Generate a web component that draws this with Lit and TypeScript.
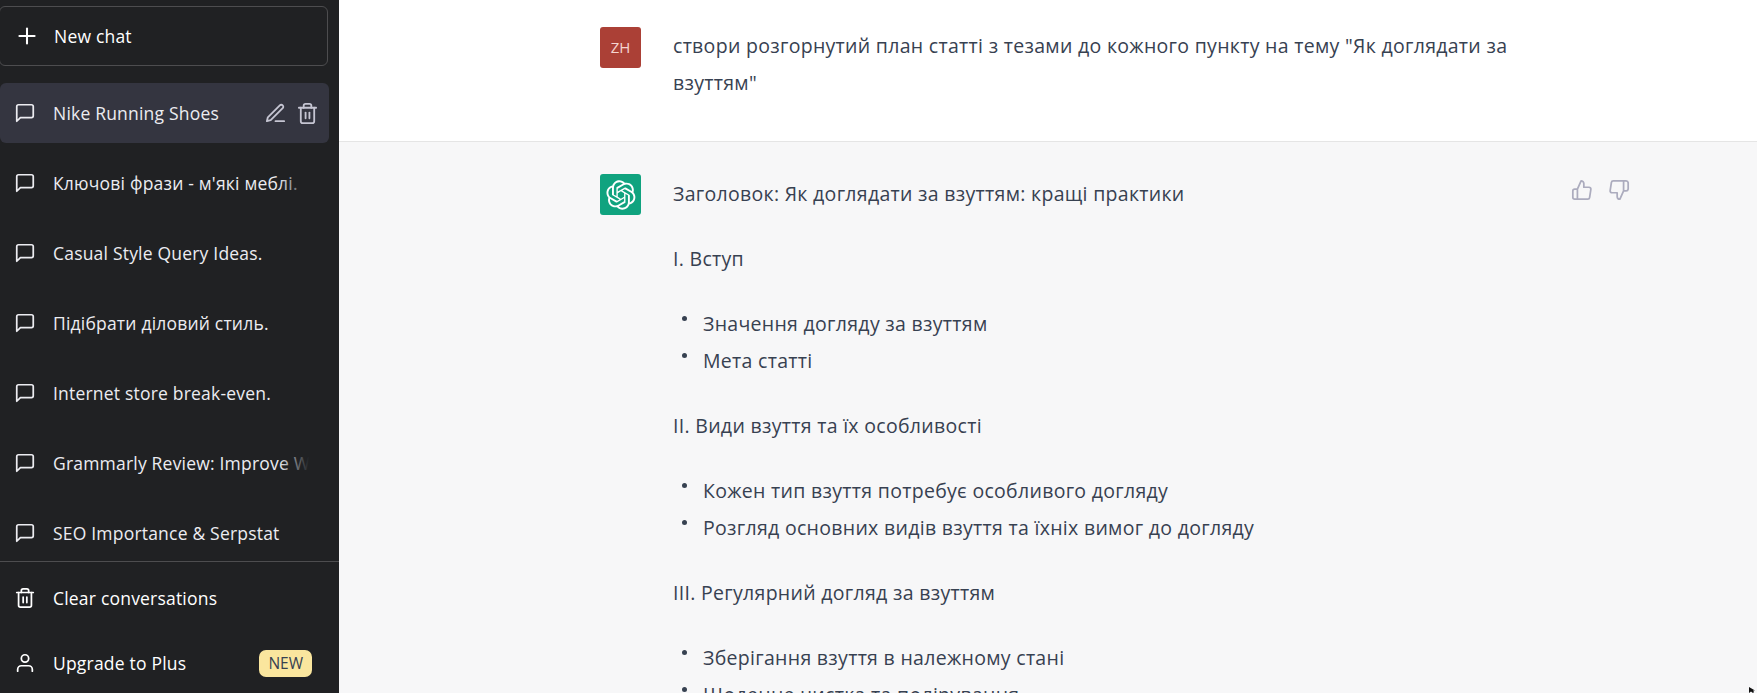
import { LitElement, html, css, svg } from "lit";
import { customElement } from "lit/decorators.js";

const ic = (inner: unknown, cls = "ic") =>
  html`<svg class=${cls} viewBox="0 0 24 24" fill="none" stroke="currentColor" stroke-width="1.9" stroke-linecap="round" stroke-linejoin="round">${inner}</svg>`;
const msg = () => ic(svg`<path d="M21 15a2 2 0 0 1-2 2H7l-4 4V5a2 2 0 0 1 2-2h14a2 2 0 0 1 2 2z"/>`);
const trash = (cls = "ic") => ic(svg`<polyline points="3 6 5 6 21 6"/><path d="M19 6v14a2 2 0 0 1-2 2H7a2 2 0 0 1-2-2V6m3 0V4a2 2 0 0 1 2-2h4a2 2 0 0 1 2 2v2"/><line x1="10" y1="11" x2="10" y2="17"/><line x1="14" y1="11" x2="14" y2="17"/>`, cls);
const pen = () => ic(svg`<path d="M12 20h9"/><path d="M16.5 3.5a2.121 2.121 0 0 1 3 3L7 19l-4 1 1-4L16.5 3.5z"/>`, "tool");
const plus = () => ic(svg`<line x1="12" y1="5" x2="12" y2="19"/><line x1="5" y1="12" x2="19" y2="12"/>`, "plus");
const user = () => ic(svg`<path d="M20 21v-2a4 4 0 0 0-4-4H8a4 4 0 0 0-4 4v2"/><circle cx="12" cy="7" r="4"/>`);
const up = () => ic(svg`<path d="M14 9V5a3 3 0 0 0-3-3l-4 9v11h11.28a2 2 0 0 0 2-1.7l1.38-9a2 2 0 0 0-2-2.3zM7 22H4a2 2 0 0 1-2-2v-7a2 2 0 0 1 2-2h3"/>`, "thumb");
const down = () => ic(svg`<path d="M10 15v4a3 3 0 0 0 3 3l4-9V2H5.72a2 2 0 0 0-2 1.7l-1.38 9a2 2 0 0 0 2 2.3zm7-13h2.67A2.31 2.31 0 0 1 22 4v7a2.31 2.31 0 0 1-2.33 2H17"/>`, "thumb");
const LOGO = "M37.5324 16.8707C37.9808 15.5241 38.1363 14.0974 37.9886 12.6859C37.8409 11.2744 37.3934 9.91076 36.676 8.68622C35.6126 6.83404 33.9882 5.3676 32.0373 4.4985C30.0864 3.62941 27.9098 3.40259 25.8215 3.85078C24.8796 2.7893 23.7219 1.94125 22.4257 1.36341C21.1295 0.785575 19.7249 0.491269 18.3058 0.500197C16.1708 0.495044 14.0893 1.16803 12.3614 2.42214C10.6335 3.67624 9.34853 5.44666 8.6917 7.47815C7.30085 7.76286 5.98686 8.3414 4.8377 9.17505C3.68854 10.0087 2.73073 11.0782 2.02839 12.312C0.956464 14.1591 0.498905 16.2988 0.721698 18.4228C0.944492 20.5467 1.83612 22.5449 3.268 24.1293C2.81966 25.4759 2.66413 26.9026 2.81182 28.3141C2.95951 29.7256 3.40701 31.0892 4.12437 32.3138C5.18791 34.1659 6.8123 35.6322 8.76321 36.5013C10.7141 37.3704 12.8907 37.5973 14.9789 37.1492C15.9208 38.2107 17.0786 39.0587 18.3747 39.6366C19.6709 40.2144 21.0755 40.5087 22.4946 40.4998C24.6307 40.5054 26.7133 39.8321 28.4418 38.5772C30.1704 37.3223 31.4556 35.5506 32.1119 33.5179C33.5027 33.2332 34.8167 32.6547 35.9659 31.821C37.115 30.9874 38.0728 29.9178 38.7752 28.684C39.8458 26.8371 40.3023 24.6979 40.0789 22.5748C39.8556 20.4517 38.9639 18.4544 37.5324 16.8707ZM22.4978 37.8849C20.7443 37.8874 19.0459 37.2733 17.6994 36.1501C17.7601 36.117 17.8666 36.0586 17.936 36.0161L25.9004 31.4156C26.1003 31.3019 26.2663 31.137 26.3813 30.9378C26.4964 30.7386 26.5563 30.5124 26.5549 30.2825V19.0542L29.9213 20.998C29.9389 21.0068 29.9541 21.0198 29.9656 21.0359C29.977 21.052 29.9842 21.0707 29.9867 21.0902V30.3889C29.9842 32.375 29.1946 34.2791 27.7909 35.6841C26.3872 37.0892 24.4838 37.8806 22.4978 37.8849ZM6.39227 31.0064C5.51397 29.4888 5.19742 27.7107 5.49804 25.9832C5.55718 26.0187 5.66048 26.0818 5.73461 26.1244L13.699 30.7248C13.8975 30.8408 14.1233 30.902 14.3532 30.902C14.583 30.902 14.8088 30.8408 15.0073 30.7248L24.731 25.1103V28.9979C24.7321 29.0177 24.7283 29.0376 24.7199 29.0556C24.7115 29.0736 24.6988 29.0893 24.6829 29.1012L16.6317 33.7497C14.9096 34.7416 12.8643 35.0097 10.9447 34.4954C9.02506 33.9811 7.38785 32.7263 6.39227 31.0064ZM4.29707 13.6194C5.17156 12.0998 6.55279 10.9364 8.19885 10.3327C8.19885 10.4013 8.19491 10.5228 8.19491 10.6071V19.808C8.19351 20.0378 8.25334 20.2638 8.36823 20.4629C8.48312 20.6619 8.64893 20.8267 8.84863 20.9404L18.5723 26.5542L15.206 28.4979C15.1894 28.5089 15.1703 28.5155 15.1505 28.5173C15.1307 28.5191 15.1107 28.516 15.0924 28.5082L7.04046 23.8557C5.32135 22.8601 4.06716 21.2235 3.55289 19.3046C3.03862 17.3858 3.30624 15.3413 4.29707 13.6194ZM31.955 20.0556L22.2312 14.4411L25.5976 12.4981C25.6142 12.4872 25.6333 12.4805 25.6531 12.4787C25.6729 12.4769 25.6928 12.4801 25.7111 12.4879L33.7631 17.1364C34.9967 17.849 36.0017 18.8982 36.6606 20.1613C37.3194 21.4244 37.6047 22.849 37.4832 24.2684C37.3617 25.6878 36.8382 27.0432 35.9743 28.1759C35.1103 29.3086 33.9415 30.1717 32.6047 30.6641C32.6047 30.5947 32.6047 30.4733 32.6047 30.3889V21.188C32.6066 20.9586 32.5474 20.7328 32.4332 20.5338C32.319 20.3348 32.154 20.1698 31.955 20.0556ZM35.3055 15.0128C35.2464 14.9765 35.1431 14.9142 35.069 14.8717L27.1045 10.2712C26.906 10.1554 26.6803 10.0943 26.4504 10.0943C26.2206 10.0943 25.9948 10.1554 25.7963 10.2712L16.0726 15.8858V11.9982C16.0715 11.9783 16.0753 11.9585 16.0837 11.9405C16.0921 11.9225 16.1048 11.9068 16.1207 11.8949L24.1719 7.25025C25.4053 6.53903 26.8158 6.19376 28.2383 6.25482C29.6608 6.31589 31.0364 6.78077 32.2044 7.59508C33.3723 8.40939 34.2842 9.53945 34.8334 10.8531C35.3826 12.1667 35.5464 13.6095 35.3055 15.0128ZM14.2424 21.9419L10.8752 19.9981C10.8576 19.9893 10.8423 19.9763 10.8309 19.9602C10.8195 19.9441 10.8122 19.9254 10.8098 19.9058V10.6071C10.8107 9.18295 11.2173 7.78848 11.9819 6.58696C12.7466 5.38544 13.8377 4.42659 15.1275 3.82264C16.4173 3.21869 17.8524 2.99464 19.2649 3.1767C20.6775 3.35876 22.0089 3.93941 23.1034 4.85067C23.0427 4.88379 22.937 4.94215 22.8668 4.98473L14.9024 9.58517C14.7025 9.69878 14.5366 9.86356 14.4215 10.0626C14.3065 10.2616 14.2466 10.4877 14.2479 10.7175L14.2424 21.9419ZM16.071 17.9991L20.4018 15.4978L24.7325 17.9975V22.9985L20.4018 25.4983L16.071 22.9985V17.9991Z";

const chats = [
  "Ключові фрази - м'які меблі.",
  "Casual Style Query Ideas.",
  "Підібрати діловий стиль.",
  "Internet store break-even.",
  "Grammarly Review: Improve W",
  "SEO Importance & Serpstat",
];

const answer: (string | string[])[] = [
  "I. Вступ",
  ["Значення догляду за взуттям", "Мета статті"],
  "II. Види взуття та їх особливості",
  ["Кожен тип взуття потребує особливого догляду", "Розгляд основних видів взуття та їхніх вимог до догляду"],
  "III. Регулярний догляд за взуттям",
  ["Зберігання взуття в належному стані", "Щоденне чистка та полірування"],
];

@customElement("app-root")
export class AppRoot extends LitElement {
  static styles = css`
    :host { display: block; width: 1757px; height: 693px; overflow: hidden; position: relative; font-family: "Open Sans", "Noto Sans", sans-serif; }
    .page { display: flex; height: 693px; }
    .side { width: 339px; flex: none; background: #202123; color: #ececf1; display: flex; flex-direction: column; font-size: 17.5px; letter-spacing: 0.2px; overflow: hidden; }
    .ic { width: 22px; height: 22px; flex: none; }
    .plus { width: 26px; height: 26px; flex: none; }
    .tool { width: 23px; height: 23px; flex: none; }
    .new { display: flex; align-items: center; gap: 14px; height: 60px; box-sizing: border-box; width: 329px; margin: 6px 0 0 -1px; padding-left: 14px; border: 1px solid #4d4d4f; border-radius: 6px; color: #fff; }
    .list { flex: 1; display: flex; flex-direction: column; padding-top: 17px; min-height: 0; }
    .row { display: flex; align-items: center; gap: 17px; width: 329px; height: 60px; box-sizing: border-box; padding-left: 14px; margin-bottom: 10px; border-radius: 6px; flex: none; color: #ececf1; }
    .row.active { background: #343540; }
    .title { flex: 1; min-width: 0; white-space: nowrap; overflow: hidden; position: relative; margin-right: 20px; }
    .fade .title::after { content: ""; position: absolute; inset: 0 0 0 auto; width: 30px; background: linear-gradient(to left, #202123, rgba(32,33,35,0)); }
    .row.active .title { margin-right: 0; }
    .tools { display: flex; gap: 9.5px; color: #c5c5d2; padding-right: 10px; }
    .foot { border-top: 1px solid #4d4d4f; height: 132px; box-sizing: border-box; flex: none; display: flex; flex-direction: column; color: #fff; padding-top: 6px; }
    .fitem { display: flex; align-items: center; gap: 17px; height: 60px; padding-left: 14px; width: 329px; box-sizing: border-box; }
    .fitem + .fitem { margin-top: 5px; }
    .badge { margin-left: auto; margin-right: 17px; background: #fae69e; color: #374151; font-size: 15.5px; font-weight: 500; letter-spacing: 0; border-radius: 7px; padding: 0 9px; line-height: 27px; }
    .main { flex: 1; min-width: 0; color: #374151; font-size: 19.5px; letter-spacing: 0.3px; line-height: 37px; }
    .msg { display: flex; padding-left: 261px; }
    .msg.u { background: #fff; height: 142px; box-sizing: border-box; border-bottom: 1px solid #e5e5e5; padding-top: 27px; }
    .msg.g { background: #f7f7f8; height: 551px; padding-top: 32px; box-sizing: border-box; }
    .ava { width: 41px; height: 41px; border-radius: 3px; flex: none; margin-right: 32px; display: flex; align-items: center; justify-content: center; color: #f5d5d0; font-size: 15px; font-weight: 500; letter-spacing: 0; line-height: 1; }
    .ava.z { background: #ab4036; }
    .ava.o { background: #10a37f; color: #fff; }
    .ava svg { width: 30px; height: 30px; }
    .body { width: 841px; flex: none; }
    .g .body { padding-top: 1px; }
    p { margin: 0 0 28px; }
    ul { margin: 0 0 28px; padding: 0 0 0 30px; list-style: none; }
    li { position: relative; }
    li::before { content: ""; position: absolute; left: -21px; top: 11px; width: 5px; height: 5px; border-radius: 50%; background: #374151; }
    .thumbs { display: flex; gap: 15px; color: #acacbe; margin: 5px 0 0 57px; height: 22px; }
    .thumb { width: 22px; height: 22px; flex: none; }
    .cursor { position: absolute; right: 0; bottom: 0; width: 8px; height: 6px; }
  `;

  render() {
    return html`<div class="page">
      <aside class="side">
        <div class="new">${plus()}<span>New chat</span></div>
        <div class="list">
          <div class="row active">${msg()}<div class="title">Nike Running Shoes</div><div class="tools">${pen()}${trash("tool")}</div></div>
          ${chats.map((c) => html`<div class="row fade">${msg()}<div class="title">${c}</div></div>`)}
        </div>
        <div class="foot">
          <div class="fitem">${trash()}<span>Clear conversations</span></div>
          <div class="fitem">${user()}<span>Upgrade to Plus</span><span class="badge">NEW</span></div>
        </div>
      </aside>
      <main class="main">
        <section class="msg u">
          <div class="ava z">ZH</div>
          <div class="body">створи розгорнутий план статті з тезами до кожного пункту на тему "Як доглядати за взуттям"</div>
        </section>
        <section class="msg g">
          <div class="ava o"><svg viewBox="0 0 41 41" fill="currentColor"><path d=${LOGO}/></svg></div>
          <div class="body">
            <p>Заголовок: Як доглядати за взуттям: кращі практики</p>
            ${answer.map((a) => typeof a === "string" ? html`<p>${a}</p>` : html`<ul>${a.map((i) => html`<li>${i}</li>`)}</ul>`)}
          </div>
          <div class="thumbs">${up()}${down()}</div>
        </section>
      </main>
    </div>
    <svg class="cursor" viewBox="0 0 8 6"><path d="M0 0v6l2-1.5L4 6l1-1-1-1.5h2z" fill="#111"/></svg>`;
  }
}
